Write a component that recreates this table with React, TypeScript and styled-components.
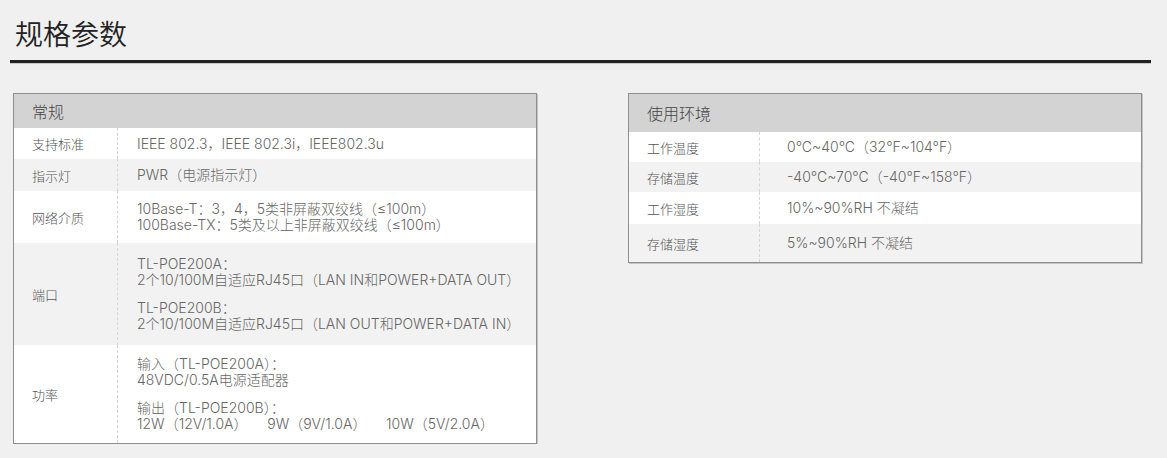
import React from 'react';
import styled, { createGlobalStyle } from 'styled-components';

const GlobalStyle = createGlobalStyle`
  body {
    margin: 0;
    background: #f0f0f0;
    font-family: Inter, "Noto Sans CJK SC", sans-serif;
    font-weight: 300;
    color: #555;
  }
  * {
    box-sizing: border-box;
  }
`;

const Page = styled.div`
  width: 1151px;
  padding: 15px 0 0 10px;
`;

const Title = styled.h2`
  margin: 0 0 0 5px;
  height: 45px;
  line-height: 36px;
  font-size: 28px;
  font-weight: 350;
  color: #222;
  font-family: "Noto Sans CJK SC", sans-serif;
`;

const Rule = styled.div`
  height: 3px;
  background: #222;
  box-shadow: 0 1px 0 #c8c8c8;
`;

const Tables = styled.div`
  display: flex;
  align-items: flex-start;
  gap: 91px;
  margin: 30px 0 0 3px;
`;

const Table = styled.div<{ $width: number }>`
  width: ${({ $width }) => $width}px;
  border: 1px solid #8e8e8e;
  box-shadow: 1px 1px 0 #c4c4c4;
  background: #fff;
`;

const Head = styled.div<{ $height: number }>`
  height: ${({ $height }) => $height}px;
  display: flex;
  align-items: center;
  padding-left: 18px;
  background: #d3d3d3;
  font-size: 16px;
  color: #444;
  font-family: "Noto Sans CJK SC", sans-serif;
  font-weight: 300;
`;

const Row = styled.div<{ $alt?: boolean; $labelWidth: number; $minHeight?: number }>`
  display: grid;
  grid-template-columns: ${({ $labelWidth }) => $labelWidth}px 1fr;
  min-height: ${({ $minHeight }) => $minHeight ?? 31}px;
  background: ${({ $alt }) => ($alt ? '#f2f2f2' : '#fff')};
`;

const Label = styled.div`
  display: flex;
  align-items: center;
  padding-left: 18px;
  border-right: 1px dashed #d6d6d6;
  font-size: 13px;
  color: #555;
`;

const Value = styled.div<{ $pad: number; $indent: number }>`
  display: flex;
  flex-direction: column;
  justify-content: center;
  gap: 12px;
  padding: ${({ $pad }) => $pad}px 0 ${({ $pad }) => $pad}px ${({ $indent }) => $indent}px;
  font-size: 14px;
  color: #666;
  line-height: 16px;
`;

const Para = styled.div``;

const Line = styled.div`
  white-space: pre;
`;

type Spec = { label: string; lines: string[][]; minHeight?: number; pad?: number };

const general: Spec[] = [
  { label: '支持标准', lines: [['IEEE 802.3，IEEE 802.3i，IEEE802.3u']] },
  { label: '指示灯', lines: [['PWR（电源指示灯）']], minHeight: 32 },
  {
    label: '网络介质',
    pad: 10,
    lines: [['10Base-T：3，4，5类非屏蔽双绞线（≤100m）', '100Base-TX：5类及以上非屏蔽双绞线（≤100m）']],
  },
  {
    label: '端口',
    pad: 13,
    lines: [
      ['TL-POE200A：', '2个10/100M自适应RJ45口（LAN IN和POWER+DATA OUT）'],
      ['TL-POE200B：', '2个10/100M自适应RJ45口（LAN OUT和POWER+DATA IN）'],
    ],
  },
  {
    label: '功率',
    pad: 11,
    lines: [
      ['输入（TL-POE200A）：', '48VDC/0.5A电源适配器'],
      ['输出（TL-POE200B）：', '12W（12V/1.0A）     9W（9V/1.0A）     10W（5V/2.0A）'],
    ],
  },
];

const env: Spec[] = [
  { label: '工作温度', lines: [['0°C~40°C（32°F~104°F）']], minHeight: 30 },
  { label: '存储温度', lines: [['-40°C~70°C（-40°F~158°F）']], minHeight: 30 },
  { label: '工作湿度', lines: [['10%~90%RH 不凝结']], minHeight: 32 },
  { label: '存储湿度', lines: [['5%~90%RH 不凝结']], minHeight: 38 },
];

function SpecTable({
  title,
  rows,
  width,
  headHeight,
  labelWidth,
  indent,
}: {
  title: string;
  rows: Spec[];
  width: number;
  headHeight: number;
  labelWidth: number;
  indent: number;
}) {
  return (
    <Table $width={width}>
      <Head $height={headHeight}>{title}</Head>
      {rows.map((r, i) => (
        <Row key={r.label} $alt={i % 2 === 1} $labelWidth={labelWidth} $minHeight={r.minHeight}>
          <Label>{r.label}</Label>
          <Value $pad={r.pad ?? 0} $indent={indent}>
            {r.lines.map((p, j) => (
              <Para key={j}>
                {p.map((l, k) => (
                  <Line key={k}>{l}</Line>
                ))}
              </Para>
            ))}
          </Value>
        </Row>
      ))}
    </Table>
  );
}

export default function App() {
  return (
    <>
      <GlobalStyle />
      <Page>
        <Title>规格参数</Title>
        <Rule />
        <Tables>
          <SpecTable title="常规" rows={general} width={524} headHeight={34} labelWidth={104} indent={19} />
          <SpecTable title="使用环境" rows={env} width={514} headHeight={38} labelWidth={131} indent={27} />
        </Tables>
      </Page>
    </>
  );
}
